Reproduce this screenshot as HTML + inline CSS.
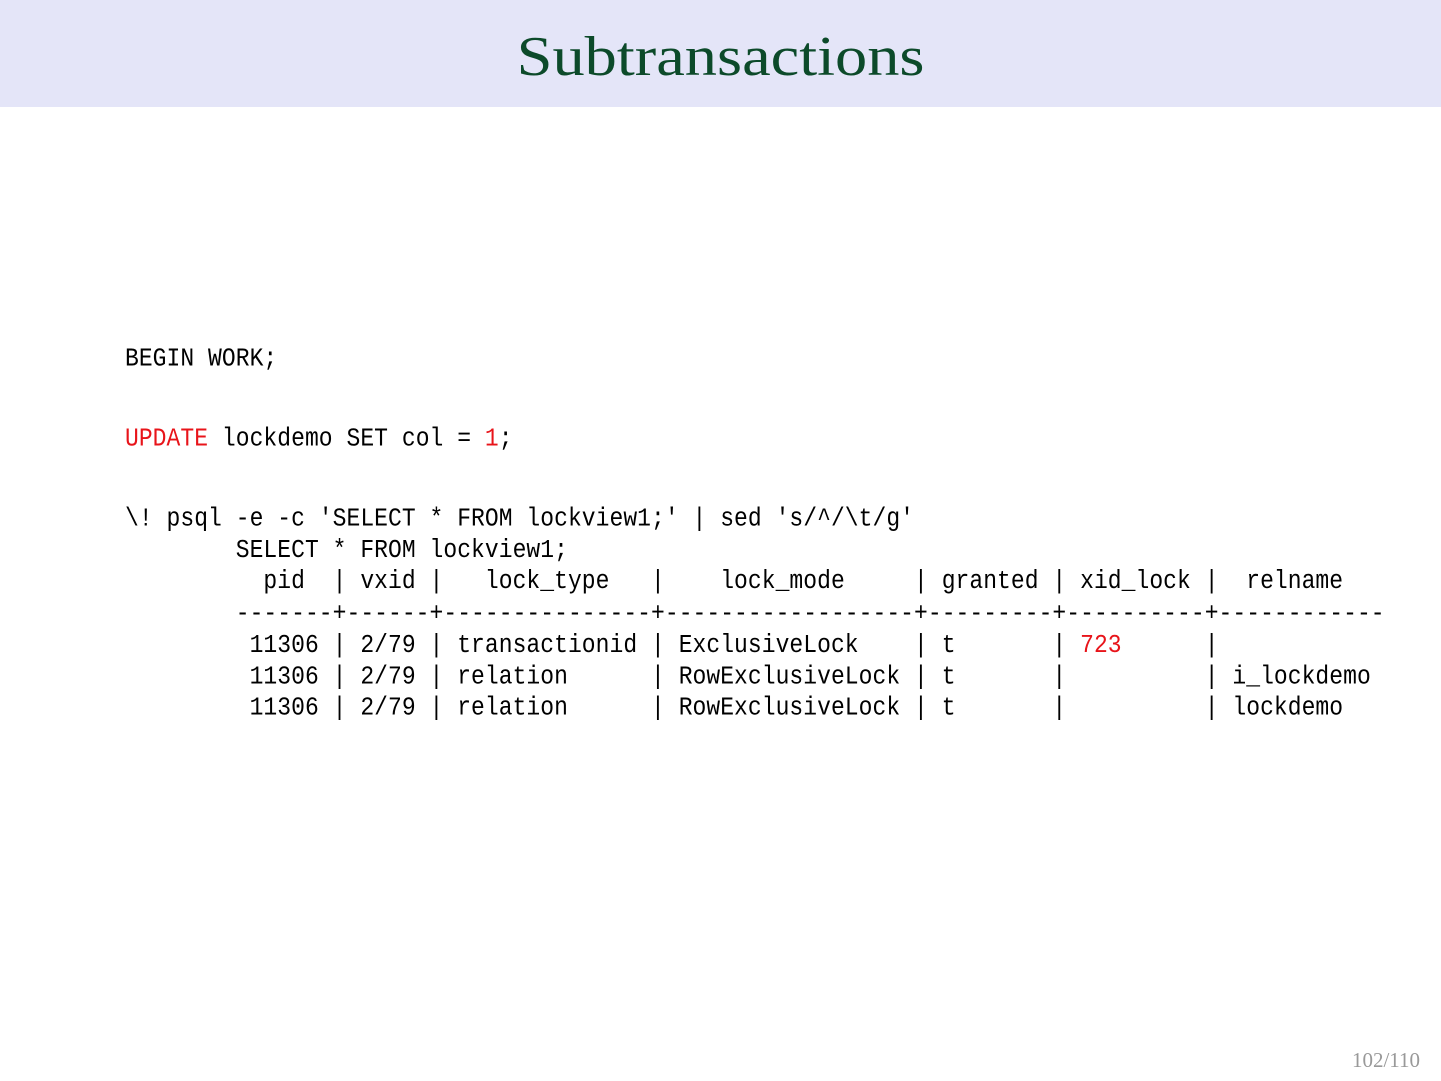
<!DOCTYPE html>
<html><head><meta charset="utf-8"><style>
body{margin:0;width:1441px;height:1081px;background:#fff;position:relative;overflow:hidden}
.hdr{position:absolute;left:0;top:0;width:1441px;height:107px;background:#e4e5f8}
.title{position:absolute;left:0;width:1441px;top:22px;text-align:center;font-family:"Liberation Serif",serif;font-size:56px;line-height:70px;color:#0c4a2a;transform:scaleX(1.15);transform-origin:720px 0}
pre{position:absolute;margin:0;font-family:"Liberation Mono",monospace;font-size:23px;letter-spacing:0.04px;color:#000;transform:scaleY(1.12);transform-origin:0 0}
.r{color:#e8141a}
.pg{position:absolute;right:21px;top:1048px;font-family:"Liberation Serif",serif;font-size:21px;color:#999}
</style></head><body>
<div class="hdr"></div>
<div class="title">Subtransactions</div>
<pre style="left:125px;top:344px">BEGIN WORK;</pre>
<pre style="left:125px;top:424px"><span class="r">UPDATE</span> lockdemo SET col = <span class="r">1</span>;</pre>
<pre style="left:125px;top:503px;line-height:28.2px">\! psql -e -c 'SELECT * FROM lockview1;' | sed 's/^/\t/g'
        SELECT * FROM lockview1;
          pid  | vxid |   lock_type   |    lock_mode     | granted | xid_lock |  relname
        -------+------+---------------+------------------+---------+----------+------------
         11306 | 2/79 | transactionid | ExclusiveLock    | t       | <span class="r">723</span>      |
         11306 | 2/79 | relation      | RowExclusiveLock | t       |          | i_lockdemo
         11306 | 2/79 | relation      | RowExclusiveLock | t       |          | lockdemo</pre>
<div class="pg">102/110</div>
</body></html>
